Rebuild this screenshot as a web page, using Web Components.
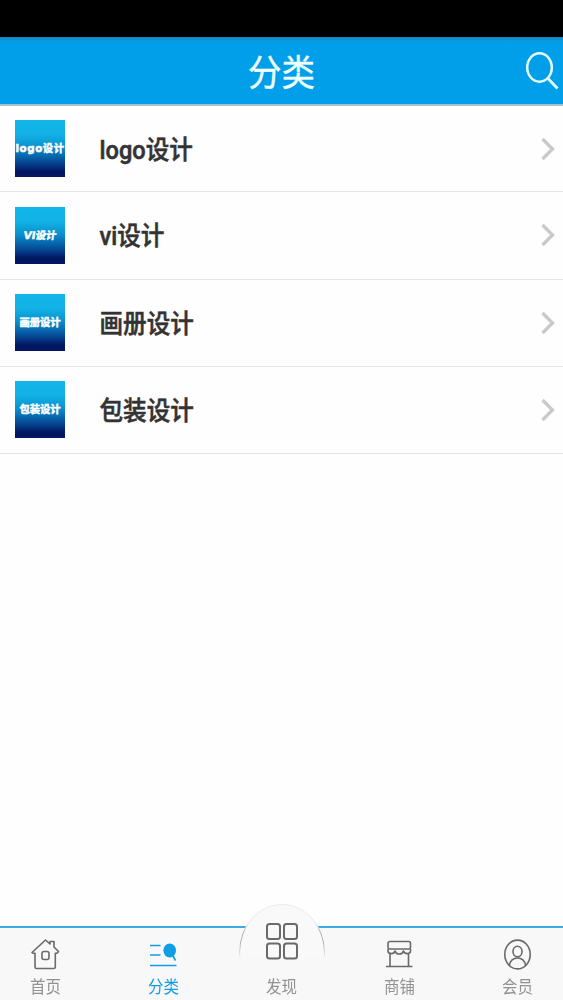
<!DOCTYPE html>
<html lang="zh-CN">
<head>
<meta charset="utf-8">
<title>分类</title>
<style>
  html, body {
    margin: 0;
    height: 100%;
    overflow: hidden;
  }
  body {
    font-family: Roboto, "Noto Sans CJK SC", sans-serif;
    background: #fefefe;
    color: #333;
  }
</style>
</head>
<body>
<app-screen>
  <title-bar slot="header">分类</title-bar>
  <category-row thumb="logo设计" spacing=".6">logo设计</category-row>
  <category-row thumb="VI设计" slanted>vi设计</category-row>
  <category-row thumb="画册设计">画册设计</category-row>
  <category-row thumb="包装设计">包装设计</category-row>
  <tab-bar slot="footer">
    <tab-item icon="home">首页</tab-item>
    <tab-item icon="category" active>分类</tab-item>
    <tab-item icon="grid" raised>发现</tab-item>
    <tab-item icon="shop">商铺</tab-item>
    <tab-item icon="user">会员</tab-item>
  </tab-bar>
</app-screen>

<script>
// Whole page: status strip, header, list, bottom tabs
class AppScreen extends HTMLElement {
  constructor() {
    super()
    this.attachShadow({mode: 'open'})
    this.shadowRoot.innerHTML = `
      <style>
        :host {
          display: flex;
          flex-direction: column;
          height: 100vh;
          overflow: hidden;
        }
        .status {
          flex: none;
          height: 37px;
          background: #000;
        }
        main {
          flex: 1;
          min-height: 0;
        }
      </style>
      <div class="status"></div>
      <slot name="header"></slot>
      <main><slot></slot></main>
      <slot name="footer"></slot>
    `
  }
}
customElements.define('app-screen', AppScreen)

class TitleBar extends HTMLElement {
  constructor() {
    super()
    this.attachShadow({mode: 'open'})
    this.shadowRoot.innerHTML = `
      <style>
        :host {
          display: grid;
          grid-template-columns: 1fr auto 1fr;
          align-items: center;
          flex: none;
          box-sizing: border-box;
          height: 69px;
          background: linear-gradient(#1680b4 0, #0a98de 3px, #019fea 7px);
          border-bottom: 2px solid #a3bfd0;
          color: #f0ffff;
        }
        h1 {
          grid-column: 2;
          margin: 0;
          font-size: 33.5px;
          font-weight: 400;
          line-height: 40px;
          transform: translateY(2.5px) scaleY(1.1);
          -webkit-text-stroke: .3px #f0ffff;
        }
        svg {
          justify-self: end;
          margin: -2px 4px 0 0;
          display: block;
        }
      </style>
      <h1><slot></slot></h1>
      <svg width="36" height="40" viewBox="0 0 36 40" fill="none" stroke="#e6fdff" stroke-width="2.5">
        <ellipse cx="16.5" cy="17.5" rx="12.3" ry="14.2"/>
        <path d="M25 28.5 34.5 38.5" stroke-width="2.8"/>
      </svg>
    `
  }
}
customElements.define('title-bar', TitleBar)

class CategoryRow extends HTMLElement {
  constructor() {
    super()
    this.attachShadow({mode: 'open'})
    this.shadowRoot.innerHTML = `
      <style>
        :host {
          display: flex;
          align-items: center;
          box-sizing: border-box;
          height: 87.25px;
          padding: 0 8px 0 15px;
          border-bottom: 1px solid #e4e4e4;
        }
        :host(:first-of-type) {
          height: 86.25px;
        }
        .thumb {
          display: flex;
          flex: none;
          align-items: center;
          justify-content: center;
          width: 50px;
          height: 57px;
          margin-right: 34.5px;
          background: linear-gradient(#12b6e8 0, #12b2e6 25%, #0990cd 48%, #0763ab 65%, #052f7d 82%, #021662 90%);
          color: #fff;
          font-family: "DejaVu Sans", "Noto Sans CJK SC", sans-serif;
          font-size: 10.3px;
          font-weight: 700;
          white-space: nowrap;
          -webkit-text-stroke: .5px #fff;
        }
        .thumb span {
          transform: translateY(-1px);
        }
        :host([slanted]) .thumb span {
          transform: translateY(-1px) skewX(-8deg);
        }
        .label {
          flex: 1;
          font-size: 23.6px;
          font-weight: 500;
          line-height: 30px;
          transform: translateY(1.3px) scaleY(1.1);
          -webkit-text-stroke: .5px #333;
        }
      </style>
      <div class="thumb"><span></span></div>
      <div class="label"><slot></slot></div>
      <svg width="14" height="24" viewBox="0 0 14 24" fill="none" stroke="#c9c9c9" stroke-width="3.3">
        <path d="M1.5 2 11.5 12 1.5 22"/>
      </svg>
    `
  }

  connectedCallback() {
    const span = this.shadowRoot.querySelector('.thumb span')
    span.textContent = this.getAttribute('thumb')
    if (this.hasAttribute('spacing')) {
      span.style.letterSpacing = this.getAttribute('spacing') + 'px'
    }
  }
}
customElements.define('category-row', CategoryRow)

class TabBar extends HTMLElement {
  constructor() {
    super()
    this.attachShadow({mode: 'open'})
    this.shadowRoot.innerHTML = `
      <style>
        :host {
          display: grid;
          grid-template-columns: repeat(5, 118px);
          justify-content: center;
          flex: none;
          box-sizing: border-box;
          height: 74px;
          border-top: 2px solid #3eaade;
          background: #f8f8f8;
        }
      </style>
      <slot></slot>
    `
  }
}
customElements.define('tab-bar', TabBar)

const icons = {
  home: `
    <path d="M4 15.5 17.5 3l4.500 4V4.500h4V10l4.500 4.500-1.500 1.800h-1.700V30q0 1.500-1.500 1.500H8.500Q7 31.500 7 30V16.300H5.300Z"/>
    <rect x="14" y="14.5" width="7" height="8" rx="2"/>`,
  category: `
    <path d="M4 8.5h10.500M4 18h10.500M4 28.500h26.500M26.500 18l3 5.500" stroke-width="1.6"/>
    <ellipse cx="23.7" cy="13.5" rx="6.3" ry="6.9" fill="currentColor" stroke="none"/>`,
  grid: `
    <rect x="2" y="2" width="13" height="15" rx="2.5"/>
    <rect x="19" y="2" width="13" height="15" rx="2.5"/>
    <rect x="2" y="21.5" width="13" height="15" rx="2.5"/>
    <rect x="19" y="21.5" width="13" height="15" rx="2.5"/>`,
  shop: `
    <rect x="6" y="4.5" width="22.5" height="7.5" rx="2"/>
    <path d="M6 12v2c0 3.500 6 3.500 7 0 1 4 7.500 4 8.500 0 1 3.500 7 3.500 7 0v-2M8 17v12M26.500 17v12M4 29.500h26.500"/>`,
  user: `
    <ellipse cx="17.5" cy="17.5" rx="12.7" ry="14.4"/>
    <ellipse cx="17.5" cy="14.5" rx="4.5" ry="5.3"/>
    <path d="M9.500 28.500c.5-10 15.500-10 16 0"/>`
}

class TabItem extends HTMLElement {
  constructor() {
    super()
    this.attachShadow({mode: 'open'})
    this.shadowRoot.innerHTML = `
      <style>
        :host {
          display: flex;
          flex-direction: column;
          align-items: center;
          position: relative;
          padding-top: 9px;
          color: #919191;
        }
        :host([active]) {
          color: #109de8;
        }
        svg {
          display: block;
          position: relative;
          width: 36px;
          height: 36px;
          color: #6a6a6a;
        }
        :host([active]) svg {
          color: #109de8;
        }
        :host([raised]) svg {
          width: 34px;
          height: 39px;
          margin: -15.5px 0 12.5px 1px;
        }
        .label {
          position: relative;
          margin-top: 3px;
          font-size: 15.5px;
          line-height: 22px;
          transform: scaleY(1.13);
        }
        /* round bump that rises over the bar's top line */
        .bump {
          display: none;
        }
        :host([raised]) .bump {
          display: block;
          position: absolute;
          top: -24px;
          left: 16px;
          box-sizing: border-box;
          width: 86px;
          height: 97px;
          border-radius: 50%;
          border: 1px solid #ececec;
          background: #f9f9f9;
        }
        /* darker edge on the sides, fading out downwards */
        :host([raised]) .bump::after {
          content: "";
          position: absolute;
          inset: -1px;
          border-radius: 50%;
          border: 1.5px solid #aaa;
          -webkit-mask: linear-gradient(transparent 20%, #000 30%, #000 40%, transparent 54%);
          mask: linear-gradient(transparent 20%, #000 30%, #000 40%, transparent 54%);
        }
        :host([raised]) .bump::before {
          content: "";
          position: absolute;
          inset: 52px -2px -3px;
          background: #f8f8f8;
        }
      </style>
      <div class="bump"></div>
      <svg fill="none" stroke="currentColor" stroke-width="1.6" stroke-linejoin="round"></svg>
      <div class="label"><slot></slot></div>
    `
  }

  connectedCallback() {
    const svg = this.shadowRoot.querySelector('svg')
    const name = this.getAttribute('icon')
    svg.setAttribute('viewBox', name === 'grid' ? '0 0 34 39' : '0 0 36 36')
    if (name === 'grid') svg.setAttribute('stroke-width', '2')
    svg.innerHTML = icons[name]
  }
}
customElements.define('tab-item', TabItem)
</script>
</body>
</html>
